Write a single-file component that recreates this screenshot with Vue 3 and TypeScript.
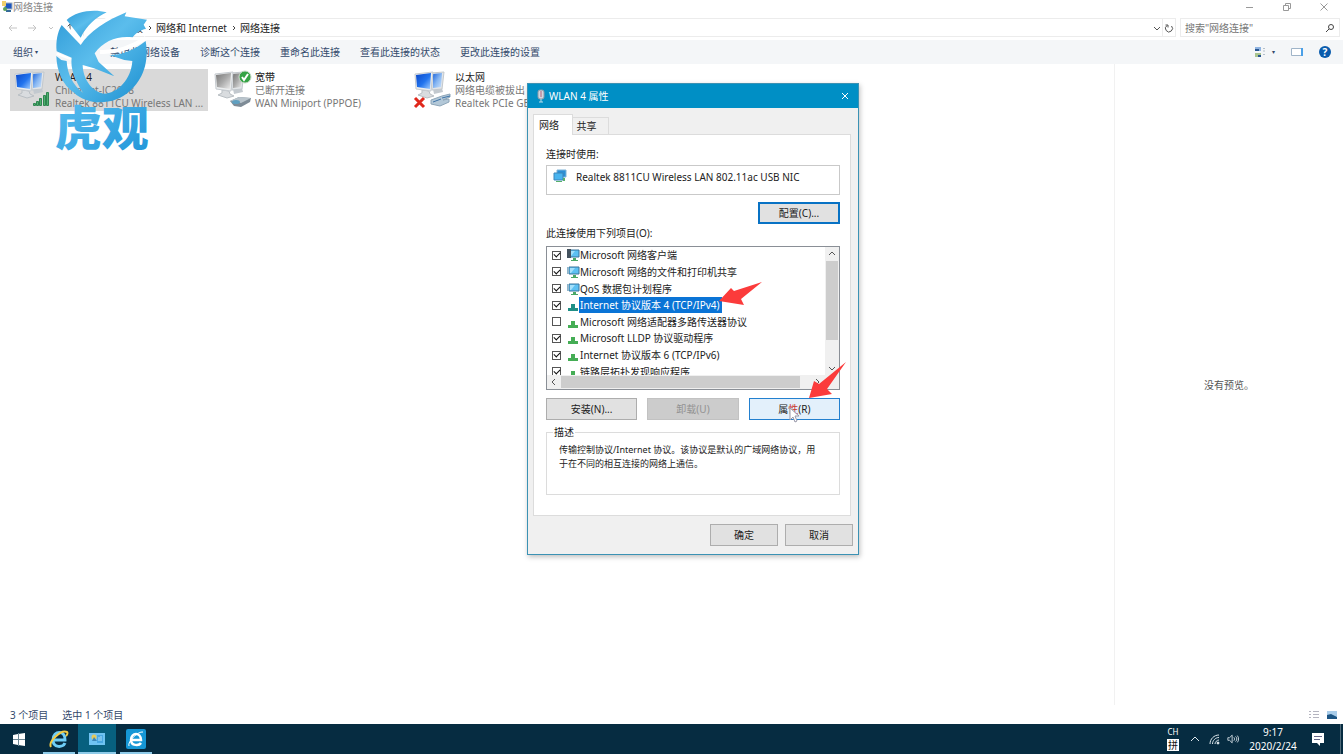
<script setup lang="ts">
import { ref } from 'vue'

interface Connection {
  name: string
  status: string
  device: string
  kind: 'wifi' | 'wan' | 'lan'
  selected: boolean
}

interface Protocol {
  id: string
  label: string
  icon: 'client' | 'monitor' | 'protocol'
  checked: boolean
}

const commands: string[] = [
  '诊断这个连接',
  '重命名此连接',
  '查看此连接的状态',
  '更改此连接的设置',
]

const connections: Connection[] = [
  { name: 'WLAN 4', status: 'ChinaNet-JC2008', device: 'Realtek 8811CU Wireless LAN ...', kind: 'wifi', selected: true },
  { name: '宽带', status: '已断开连接', device: 'WAN Miniport (PPPOE)', kind: 'wan', selected: false },
  { name: '以太网', status: '网络电缆被拔出', device: 'Realtek PCIe GBE Family', kind: 'lan', selected: false },
]

const protocols = ref<Protocol[]>([
  { id: 'client', label: 'Microsoft 网络客户端', icon: 'client', checked: true },
  { id: 'share', label: 'Microsoft 网络的文件和打印机共享', icon: 'monitor', checked: true },
  { id: 'qos', label: 'QoS 数据包计划程序', icon: 'monitor', checked: true },
  { id: 'ipv4', label: 'Internet 协议版本 4 (TCP/IPv4)', icon: 'protocol', checked: true },
  { id: 'mux', label: 'Microsoft 网络适配器多路传送器协议', icon: 'protocol', checked: false },
  { id: 'lldp', label: 'Microsoft LLDP 协议驱动程序', icon: 'protocol', checked: true },
  { id: 'ipv6', label: 'Internet 协议版本 6 (TCP/IPv6)', icon: 'protocol', checked: true },
  { id: 'lltd', label: '链路层拓扑发现响应程序', icon: 'protocol', checked: true },
])
const current = ref('ipv4')
</script>

<template>
  <div class="desktop">
    <header class="titlebar">
      <svg class="app-icon" viewBox="0 0 12 12" aria-hidden="true">
        <rect x="4" y="2" width="7" height="6" fill="#1c55c0" stroke="#9ab" />
        <rect x="1" y="0" width="4" height="5" fill="#f0cf6a" />
        <path d="M5 9h5v2H5z" fill="#356a9a" />
        <circle cx="4" cy="8" r="2" fill="#5aa05a" />
      </svg>
      <h1>网络连接</h1>
      <div class="win-controls">
        <button type="button" aria-label="最小化"><svg viewBox="0 0 10 10"><path d="M1 5.500h7" /></svg></button>
        <button type="button" aria-label="还原"><svg viewBox="0 0 10 10"><path d="M1.500 3.500h5v5h-5zM3.500 3V1.500h5v5H7" /></svg></button>
        <button type="button" aria-label="关闭"><svg viewBox="0 0 10 10"><path d="M1.500 1.500l7 7M8.500 1.500l-7 7" /></svg></button>
      </div>
    </header>

    <div class="address-row">
      <nav class="history">
        <button type="button" aria-label="后退"><svg viewBox="0 0 10 10"><path d="M9 5H1M4 2L1 5l3 3" /></svg></button>
        <button type="button" aria-label="前进"><svg viewBox="0 0 10 10"><path d="M1 5h8M6 2l3 3-3 3" /></svg></button>
        <button type="button" aria-label="最近"><svg viewBox="0 0 10 10"><path d="M3 4l2 2 2-2" /></svg></button>
        <button type="button" class="up" aria-label="向上"><svg viewBox="0 0 10 10"><path d="M5 9V1M2 4l3-3 3 3" /></svg></button>
      </nav>
      <div class="crumbs">
        <a href="#">面板</a><svg class="sep" viewBox="0 0 6 8"><path d="M2 2l2 2-2 2" /></svg>
        <a href="#">网络和 Internet</a><svg class="sep" viewBox="0 0 6 8"><path d="M2 2l2 2-2 2" /></svg>
        <a href="#">网络连接</a>
        <span class="fill"></span>
        <button type="button" aria-label="展开"><svg viewBox="0 0 10 10"><path d="M2 4l3 3 3-3" /></svg></button>
        <button type="button" class="refresh" aria-label="刷新"><svg viewBox="0 0 10 10"><path d="M3 2.500A3.500 3.500 0 1 0 7.500 3M1.500 2h2.500v2.500" /></svg></button>
      </div>
      <label class="search">
        <input type="search" placeholder="搜索&quot;网络连接&quot;" aria-label="搜索" />
        <svg viewBox="0 0 10 10"><circle cx="6" cy="4" r="2.500" /><path d="M4 6L1 9" /></svg>
      </label>
    </div>

    <div class="toolbar">
      <button type="button">组织<i class="dot">▾</i></button>
      <button type="button" class="disable-cmd">禁用此网络设备</button>
      <button v-for="c in commands" :key="c" type="button">{{ c }}</button>
      <span class="fill"></span>
      <button type="button" aria-label="更改视图" class="view">
        <svg viewBox="0 0 12 12"><path d="M1 1h6v4H1z" fill="#8fb4e2" /><path d="M1 7h6v4H1z" fill="#a9c48f" /><path d="M1 3h4v2H1zM4 9h3v2H4z" fill="#275590" /><path d="M9 2.500h2M9 5h2M9 8.500h2" stroke="#b4c0ca" /></svg>
        <i class="dot">▾</i>
      </button>
      <button type="button" aria-label="预览窗格"><svg viewBox="0 0 12 12"><path d="M.5 2.500h11v7H.5z" fill="#fff" stroke="#9fb4c8" /><path d="M10 2h2v8h-2z" fill="#4aa0e8" /></svg></button>
      <button type="button" aria-label="帮助" class="help">?</button>
    </div>

    <main class="content">
      <section class="tiles">
        <article v-for="c in connections" :key="c.name" class="tile" :class="{ selected: c.selected }">
          <svg class="conn" viewBox="0 0 42 40" aria-hidden="true">
            <defs>
              <linearGradient id="screen-on" x1="0" y1="0" x2="1" y2="1">
                <stop offset="0" stop-color="#0a46c8" /><stop offset=".55" stop-color="#2274ee" /><stop offset="1" stop-color="#a5d0ff" />
              </linearGradient>
              <linearGradient id="screen-back" x1="0" y1="0" x2="1" y2="1">
                <stop offset="0" stop-color="#1f66dc" /><stop offset=".5" stop-color="#86b6f2" /><stop offset="1" stop-color="#cfe4fb" />
              </linearGradient>
              <linearGradient id="screen-off" x1="0" y1="0" x2="1" y2="1">
                <stop offset="0" stop-color="#777" /><stop offset=".5" stop-color="#aaa" /><stop offset="1" stop-color="#eee" />
              </linearGradient>
            </defs>
            <path d="M20 20l9-1 1 4-9 2z" fill="#c3c9cf" />
            <path d="M18 4l13-1-2 17-10 1z" fill="#e2e5e8" stroke="#c2c8cd" />
            <path d="M20 5l9-1-1 14-8 1z" :fill="c.kind === 'wan' ? 'url(#screen-off)' : 'url(#screen-back)'" />
            <path d="M9 21l7 1 1 3 4 2-7 2-9-3 4-2z" fill="#d9dcdf" stroke="#b9bfc4" />
            <path d="M2 5l18-2-2 19-15-2z" fill="#eceeef" stroke="#c6cbd0" />
            <path d="M3 6l15-2-1 16-13-2z" :fill="c.kind === 'wan' ? 'url(#screen-off)' : 'url(#screen-on)'" />
            <g v-if="c.kind === 'wifi'" fill="#4fb070" stroke="#2f8650">
              <path d="M20.500 34.500h2v2h-2zM23.500 32.500h2v4h-2zM26.500 29.500h2v7h-2zM30.500 26.500h2v10h-2zM33.500 23.500h2v13h-2z" />
            </g>
            <g v-if="c.kind === 'wan'">
              <circle cx="32" cy="8" r="6" fill="#35a345" stroke="#c8d8c8" />
              <path d="M29 8l2 3 4-6" fill="none" stroke="#fff" stroke-width="2" />
              <path d="M17 32l9-4 12 1-1 4-9 5-7-1z" fill="#7e8b96" />
              <path d="M17 32l9-4 12 1-10 5z" fill="#b9c4cc" />
              <ellipse cx="23" cy="33" rx="4" ry="2" fill="#5f9fc0" />
            </g>
            <g v-if="c.kind === 'lan'">
              <path d="M18 31l11-4 8-2v3l-7 3 6-1v3l-9 4-9-2z" fill="#b3c8d8" stroke="#8da5b8" />
              <path d="M20 33l8-3M29 29l8-2" stroke="#3f74a8" />
              <path d="M2 29l9 9M11 29l-9 9" stroke="#e0281c" stroke-width="3" />
            </g>
          </svg>
          <div class="info">
            <strong>{{ c.name }}</strong>
            <span>{{ c.status }}</span>
            <span>{{ c.device }}</span>
          </div>
        </article>
      </section>
      <aside class="preview">没有预览。</aside>
    </main>

    <footer class="status">
      <span>3 个项目</span>
      <span>选中 1 个项目</span>
      <span class="fill"></span>
      <button type="button" aria-label="详细信息"><svg viewBox="0 0 12 10"><path d="M1 1.500h2M1 4.500h2M1 7.500h2M5 1.500h6M5 4.500h6M5 7.500h6" stroke="#b5b5c0" /></svg></button>
      <button type="button" aria-label="大图标"><svg viewBox="0 0 12 10"><path d="M1 1h10v8H1z" fill="#a9cdea" /><path d="M1 5l4-1 6 3v2H1z" fill="#1c5584" /></svg></button>
    </footer>

    <nav class="taskbar">
      <button type="button" aria-label="开始"><svg viewBox="0 0 14 14"><path d="M1 3l5-1v5H1zM6 2l7-1v6H6zM1 7h5v6l-5-1zM6 7h7v7l-7-1z" fill="#fff" /><path d="M6.500 1v13M1 7.500h12" stroke="#6d8794" /></svg></button>
      <button type="button" class="open" aria-label="Internet Explorer">
        <svg class="big" viewBox="0 0 20 20"><path d="M5 11h11c1-10-12-10-12 0 0 8 10 8 12 3" fill="none" stroke="#6fcdf6" stroke-width="3" /><path d="M2 18C-1 13 12 0 18 3c1 1 0 3-1 4" fill="none" stroke="#f3cb45" stroke-width="2" /></svg>
      </button>
      <button type="button" class="open active" aria-label="网络连接">
        <svg class="big" viewBox="0 0 20 20"><path d="M2 4h16v12H2z" fill="#6fc3f2" /><path d="M10 6h6v8h-6z" fill="#4aa8e2" /><circle cx="7" cy="8" r="2.500" fill="#e4c95a" /><path d="M7 8l3 4H5z" fill="#3d87b7" /><path d="M12 8v4M14 7v5" stroke="#a9defa" /></svg>
      </button>
      <button type="button" class="open" aria-label="浏览器">
        <svg class="big" viewBox="0 0 20 20"><rect width="20" height="20" rx="2" fill="#1597d6" /><path d="M6 11h9c0-8-10-8-10 0 0 6 8 6 10 3" fill="none" stroke="#fff" stroke-width="2.500" /><path d="M3 17C1 13 12 2 17 3" fill="none" stroke="#fff" /></svg>
      </button>
      <span class="fill"></span>
      <div class="ime"><span>CH</span><b>拼</b></div>
      <button type="button" class="tray" aria-label="显示隐藏的图标"><svg viewBox="0 0 12 12"><path d="M2 8l4-4 4 4" /></svg></button>
      <button type="button" class="tray" aria-label="网络"><svg viewBox="0 0 12 12"><path d="M2 11C2 6 6 2 11 2M4.500 11C4.500 7.500 7.500 4.500 11 4.500M7 11c0-2 2-4 4-4" /><circle cx="10" cy="10" r="1" fill="#fff" /></svg></button>
      <button type="button" class="tray" aria-label="音量"><svg viewBox="0 0 14 12"><path d="M1 4.500h2l3-3v9l-3-3H1zM8 4c1 1 1 3 0 4M10 3c2 2 2 4 0 6M12 2c2 2 2 6 0 8" /></svg></button>
      <div class="clock"><span>9:17</span><span>2020/2/24</span></div>
      <button type="button" class="notice" aria-label="通知"><svg viewBox="0 0 14 14"><path d="M1 1h12v10H9v3l-3-3H1z" fill="#fff" /><path d="M3 4.500h8M3 7.500h6" stroke="#668" /></svg></button>
      <button type="button" class="show-desktop" aria-label="显示桌面"></button>
    </nav>

    <section class="dialog" role="dialog" aria-labelledby="dialog-title">
      <header class="dialog-title">
        <svg viewBox="0 0 10 14" aria-hidden="true"><rect x="2" y="1" width="6" height="9" rx="2" fill="#cfd6df" stroke="#8b99a8" /><path d="M5 2v6" stroke="#b4637a" /><path d="M3 13h4M5 10v3" stroke="#b8dcea" /></svg>
        <h2 id="dialog-title">WLAN 4 属性</h2>
        <button type="button" aria-label="关闭"><svg viewBox="0 0 10 10"><path d="M2 2l6 6M8 2l-6 6" /></svg></button>
      </header>
      <div class="tabs" role="tablist">
        <button type="button" role="tab" aria-selected="true" class="tab on">网络</button>
        <button type="button" role="tab" aria-selected="false" class="tab">共享</button>
        <span class="tab-line"></span>
      </div>
      <div class="panel">
        <p class="caption">连接时使用:</p>
        <div class="device">
          <svg viewBox="0 0 14 14" aria-hidden="true"><path d="M4 1h9v7H4z" fill="#2b8fd6" stroke="#7fb4d8" /><path d="M1 4h9v7H1z" fill="#49b4ef" stroke="#3c85b8" /><path d="M3 12h6v1H3z" fill="#58b06a" /><path d="M10 9h2v3h-2z" fill="#58b06a" /></svg>
          <span>Realtek 8811CU Wireless LAN 802.11ac USB NIC</span>
        </div>
        <button type="button" class="btn configure">配置(C)...</button>
        <p class="caption items-caption">此连接使用下列项目(O):</p>
        <div class="listbox">
          <div class="viewport">
            <ul>
              <li v-for="p in protocols" :key="p.id" :class="{ current: p.id === current }" @click="current = p.id">
                <input :id="'item-' + p.id" v-model="p.checked" type="checkbox" />
                <svg v-if="p.icon === 'protocol'" viewBox="0 0 14 14" aria-hidden="true"><path d="M5 6h4v4h3v3H2v-3h3z" :fill="p.id === current ? '#1f8f86' : '#45ad55'" /></svg>
                <svg v-else viewBox="0 0 14 14" aria-hidden="true">
                  <path d="M3 2h10v7H3z" fill="#5cc0f2" stroke="#38759c" /><path d="M4 3h5L5 8H4z" fill="#a4e0fb" />
                  <path d="M7 10h3v2h2v1H5v-1h2z" fill="#4aa866" />
                  <path v-if="p.icon === 'client'" d="M1 1h4v9H1z" fill="#44525e" />
                  <path v-else d="M1 2h1v7H1z" fill="#8eb6cc" />
                </svg>
                <label :for="'item-' + p.id">{{ p.label }}</label>
              </li>
            </ul>
          </div>
          <div class="vbar">
            <button type="button" aria-label="向上滚动"><svg viewBox="0 0 10 10"><path d="M2 6l3-3 3 3" /></svg></button>
            <div class="vthumb"></div>
            <span class="fill"></span>
            <button type="button" aria-label="向下滚动"><svg viewBox="0 0 10 10"><path d="M2 4l3 3 3-3" /></svg></button>
          </div>
          <div class="hbar">
            <button type="button" aria-label="向左滚动"><svg viewBox="0 0 10 10"><path d="M6 2L3 5l3 3" /></svg></button>
            <div class="hthumb"></div>
            <button type="button" aria-label="向右滚动"><svg viewBox="0 0 10 10"><path d="M4 2l3 3-3 3" /></svg></button>
          </div>
        </div>
        <div class="actions">
          <button type="button" class="btn">安装(N)...</button>
          <button type="button" class="btn" disabled>卸载(U)</button>
          <button type="button" class="btn hover">属<em>性</em>(R)</button>
        </div>
        <fieldset>
          <legend>描述</legend>
          <p class="description">传输控制协议/Internet 协议。该协议是默认的广域网络协议，用于在不同的相互连接的网络上通信。</p>
        </fieldset>
      </div>
      <footer class="dialog-footer">
        <button type="button" class="btn">确定</button>
        <button type="button" class="btn">取消</button>
      </footer>
      <svg class="marks" viewBox="527 83 332 472" aria-hidden="true">
        <path d="M719 301l12-13 3 3 28-9-21 17 3 6z" fill="#fb3b3b" />
        <path d="M809 398l5-17 5 3 27-22-19 27 5 5z" fill="#fb3b3b" />
        <path d="M790 408v12l3-3 2 5 2-1-2-5h4z" fill="#fff" stroke="#99a" />
      </svg>
    </section>

    <svg class="brand" viewBox="0 0 315 450" role="img" aria-label="虎观">
      <defs>
        <linearGradient id="brand-fill" x1="0" y1="0" x2="1" y2="1">
          <stop offset="0" stop-color="#2f9bd8" /><stop offset=".45" stop-color="#5bbdec" /><stop offset="1" stop-color="#1b8fd0" />
        </linearGradient>
        <linearGradient id="brand-text" x1="0" y1="0" x2="1" y2="1">
          <stop offset="0" stop-color="#5ec1f2" /><stop offset="1" stop-color="#1e94d8" />
        </linearGradient>
      </defs>
      <path d="M37 54L92 112C116 70 170 38 229 16" stroke="#fff" stroke-width="9" />
      <path d="M20 146L62 162" stroke="#fff" stroke-width="7" />
      <path d="M150 141C190 143 240 130 288 99" stroke="#fff" stroke-width="12" />
      <g fill="url(#brand-fill)">
        <path d="M50 45C78 18 132 11 170 22C139 37 111 60 92 98Z" />
        <path d="M35 60L92 120C118 80 170 46 229 22L224 34L291 44L281 59L288 72C272 74 260 82 248 97C205 91 160 107 134 145L146 171L193 214L132 190L98 180C99 220 123 258 161 266C203 266 244 222 247 168L223 165L178 150C211 151 251 137 287 108C298 171 279 224 239 258C192 303 111 301 72 263C38 241 20 197 19 153L34 165L50 168C52 209 71 243 99 263C72 221 61 188 65 158L20 139C17 110 22 82 35 60Z" />
      </g>
      <text x="14" y="421" fill="url(#brand-text)">虎观</text>
    </svg>
  </div>
</template>

<style>
html,
body {
  overflow: hidden;
}
</style>

<style scoped>
* {
  box-sizing: border-box;
}
.desktop {
  position: relative;
  display: flex;
  flex-direction: column;
  height: 100vh;
  background: #fff;
  color: #222;
  font: 10px/14px "Noto Sans", "Noto Sans CJK SC", sans-serif;
}
button,
input {
  font: inherit;
  color: inherit;
}
button {
  display: flex;
  align-items: center;
  justify-content: center;
  padding: 0;
  border: 0;
  background: none;
  white-space: nowrap;
}
svg {
  flex: none;
  fill: none;
}
button svg {
  width: 10px;
  height: 10px;
  stroke: #555;
}
h1,
h2,
p,
ul {
  margin: 0;
  padding: 0;
  font-size: 10px;
  font-weight: 400;
}
.fill {
  flex: 1;
}
.dot {
  font-size: 6px;
  font-style: normal;
  margin-left: 2px;
}
.titlebar {
  display: flex;
  align-items: center;
  height: 18px;
  padding: 0 14px 4px 1px;
  color: #888;
}
.app-icon {
  width: 12px;
  height: 12px;
}
.win-controls {
  display: flex;
  gap: 27px;
  margin-left: auto;
}
.win-controls svg {
  stroke: #999;
}
.address-row {
  display: flex;
  height: 19px;
}
.history {
  display: flex;
  gap: 9px;
  padding-left: 8px;
  width: 83px;
}
.history svg {
  stroke: #c4c4c4;
}
.history .up svg {
  stroke: #555;
}
.crumbs {
  display: flex;
  align-items: center;
  flex: 1;
  border: 1px solid #ececec;
  padding-left: 39px;
}
.crumbs a {
  color: #222;
  text-decoration: none;
}
.sep {
  width: 6px;
  height: 8px;
  margin: 0 3px 0 4px;
  stroke: #444;
}
.refresh {
  align-self: stretch;
  width: 13px;
  border-left: 1px solid #ececec;
}
.search {
  display: flex;
  align-items: center;
  width: 160px;
  margin: 0 3px 0 4px;
  padding: 0 4px;
  border: 1px solid #ececec;
}
.search input {
  flex: 1;
  min-width: 0;
  border: 0;
  padding: 0;
  outline: 0;
  background: none;
}
.search input::placeholder {
  color: #777;
}
.search svg {
  width: 10px;
  height: 10px;
  stroke: #444;
}
.toolbar {
  display: flex;
  align-items: stretch;
  gap: 20px;
  height: 24px;
  margin-top: 3px;
  padding: 0 12px 0 13px;
  background: #f4f6f8;
  color: #33496b;
}
.toolbar svg {
  width: 12px;
  height: 12px;
  stroke: none;
}
.toolbar .disable-cmd {
  margin-left: 52px;
}
.view .dot {
  margin-left: 6px;
}
.toolbar .view {
  margin-right: -4px;
}
.toolbar .help {
  align-self: center;
  width: 12px;
  height: 12px;
  margin-left: -4px;
  border-radius: 50%;
  background: #0b5cad;
  color: #fff;
  font-weight: 700;
}
.content {
  display: flex;
  flex: 1;
  min-height: 0;
}
.tiles {
  display: flex;
  align-items: flex-start;
  gap: 2px;
  flex: 1;
  padding: 5px 10px;
}
.tile {
  display: flex;
  width: 198px;
  height: 42px;
  padding-left: 3px;
}
.tile.selected {
  background: #d9d9d9;
}
.conn {
  width: 42px;
  height: 40px;
}
.info {
  display: flex;
  flex-direction: column;
  padding-top: 2px;
  line-height: 13px;
  color: #777;
  white-space: nowrap;
}
.info strong {
  font-weight: 400;
  color: #222;
}
.preview {
  display: flex;
  align-items: center;
  justify-content: center;
  width: 229px;
  border-left: 1px solid #f1f1f1;
  color: #555;
}
.status {
  display: flex;
  align-items: center;
  gap: 14px;
  height: 19px;
  padding: 0 5px 0 10px;
  color: #33496b;
}
.status button {
  margin-left: -8px;
}
.status svg {
  width: 12px;
  height: 10px;
  stroke: none;
}
.taskbar {
  display: flex;
  align-items: stretch;
  height: 30px;
  background: #062c41;
  color: #fff;
}
.taskbar button {
  width: 38px;
  margin-right: 1px;
}
.taskbar svg {
  width: 14px;
  height: 14px;
  stroke: none;
}
.taskbar svg.big {
  width: 20px;
  height: 20px;
}
.taskbar .open {
  width: 32px;
  margin: 0 3px 0 4px;
  border-top: 2px solid transparent;
  border-bottom: 2px solid #8ecbe9;
}
.taskbar .active {
  width: 38px;
  margin: 0;
  border-top-color: #07607f;
  background: #07607f;
}
.ime {
  display: flex;
  flex-direction: column;
  align-items: center;
  justify-content: center;
  gap: 2px;
  width: 14px;
  margin-right: 8px;
  font-size: 8px;
  line-height: 10px;
}
.ime b {
  width: 12px;
  line-height: 12px;
  text-align: center;
  font-size: 10px;
  font-weight: 400;
  background: #fff;
  color: #111;
}
.taskbar .tray {
  width: 14px;
  margin-right: 5px;
}
.taskbar .tray svg {
  width: 12px;
  height: 12px;
  stroke: #dde7ec;
}
.clock {
  display: flex;
  flex-direction: column;
  justify-content: center;
  width: 56px;
  text-align: center;
  line-height: 14px;
}
.taskbar .notice {
  width: 20px;
  margin: 0 12px 0 7px;
}
.taskbar .show-desktop {
  width: 3px;
  margin: 0;
  border-left: 1px solid #4f6b7a;
}
.dialog {
  position: absolute;
  left: 527px;
  top: 83px;
  width: 332px;
  border: 1px solid #3b92b4;
  background: #f0f0f0;
  box-shadow: 1px 2px 5px rgba(0, 0, 0, 0.25);
}
.dialog-title {
  display: flex;
  align-items: center;
  height: 24px;
  padding: 0 8px;
  background: #008fc5;
  color: #fff;
}
.dialog-title > svg {
  width: 10px;
  height: 14px;
  margin-right: 3px;
}
.dialog-title button {
  margin-left: auto;
}
.dialog-title button svg {
  stroke: #fff;
}
.tabs {
  display: flex;
  align-items: flex-end;
  height: 27px;
  padding: 0 7px 0 5px;
}
.tab {
  width: 36px;
  height: 18px;
  padding-right: 8px;
  border: 1px solid #dcdcdc;
  border-left: 0;
}
.tab.on {
  width: 40px;
  height: 21px;
  border-left: 1px solid #dcdcdc;
  border-bottom: 0;
  background: #fff;
}
.tab-line {
  flex: 1;
  border-bottom: 1px solid #dcdcdc;
}
.panel {
  margin: 0 7px 0 5px;
  padding: 12px 10px 20px 12px;
  border: 1px solid #dcdcdc;
  border-top-width: 0;
  background: #fff;
}
.device {
  display: flex;
  gap: 9px;
  height: 30px;
  margin-top: 4px;
  padding: 3px 6px;
  border: 1px solid #c9c9c9;
  line-height: 16px;
}
.device svg {
  width: 14px;
  height: 14px;
}
.btn {
  height: 22px;
  border: 1px solid #adadad;
  background: #e1e1e1;
}
.btn:disabled {
  border-color: #c2c2c2;
  background: #ccc;
  color: #929292;
}
.configure {
  width: 82px;
  margin: 7px 0 0 auto;
  border: 2px solid #0872c4;
}
.items-caption {
  margin-top: 2px;
}
.listbox {
  display: grid;
  grid-template: 128px 14px / 1fr 14px;
  margin-top: 6px;
  border: 1px solid #8a8f96;
  background: #f0f0f0;
}
.viewport {
  overflow: hidden;
  background: #fff;
}
.viewport ul {
  display: grid;
  grid-auto-rows: 1fr;
  height: 133px;
  list-style: none;
}
.viewport li {
  display: flex;
  align-items: center;
  padding-left: 5px;
  white-space: nowrap;
}
.viewport li input {
  appearance: none;
  display: grid;
  place-items: center;
  width: 9px;
  height: 9px;
  margin: 0 5px 0 0;
  border: 1px solid #555;
  background: #fff;
}
.viewport li input:checked::before {
  content: "";
  width: 5px;
  height: 3px;
  margin-bottom: 2px;
  border: solid #111;
  border-width: 0 0 1px 1px;
  transform: rotate(-45deg);
}
.viewport li svg {
  width: 14px;
  height: 14px;
  margin-right: -1px;
}
.viewport label {
  padding: 0 2px 0 1px;
  line-height: 16px;
}
.viewport .current label {
  background: #0a74d6;
  color: #fff;
}
.vbar {
  display: flex;
  flex-direction: column;
}
.vbar button,
.hbar button {
  width: 14px;
  height: 14px;
}
.vthumb {
  height: 79px;
  margin: 0 1px;
  background: #cdcdcd;
}
.hbar {
  display: flex;
}
.hthumb {
  width: 239px;
  margin: 1px 10px 1px 0;
  background: #cdcdcd;
}
.actions {
  display: grid;
  grid-template-columns: 1fr 1fr 1fr;
  gap: 10px;
  margin-top: 8px;
}
.hover {
  border-color: #2380cf;
  background: #e3f0fb;
}
.hover em {
  font-style: normal;
  color: #c8372f;
}
fieldset {
  height: 70px;
  margin: 5px 0 0;
  padding: 4px 18px 0 12px;
  border: 1px solid #dcdcdc;
}
legend {
  margin-left: -6px;
  padding: 0 1px;
}
.description {
  font-size: 9px;
}
.dialog-footer {
  display: flex;
  justify-content: flex-end;
  gap: 7px;
  padding: 8px 5px;
}
.dialog-footer .btn {
  width: 68px;
}
.marks {
  position: absolute;
  left: -1px;
  top: -1px;
  width: 332px;
  height: 472px;
  pointer-events: none;
}
.brand {
  position: absolute;
  left: 50px;
  top: 5px;
  width: 105px;
  height: 150px;
  pointer-events: none;
}
.brand text {
  font: 900 141px "Noto Sans CJK SC", sans-serif;
}
</style>
